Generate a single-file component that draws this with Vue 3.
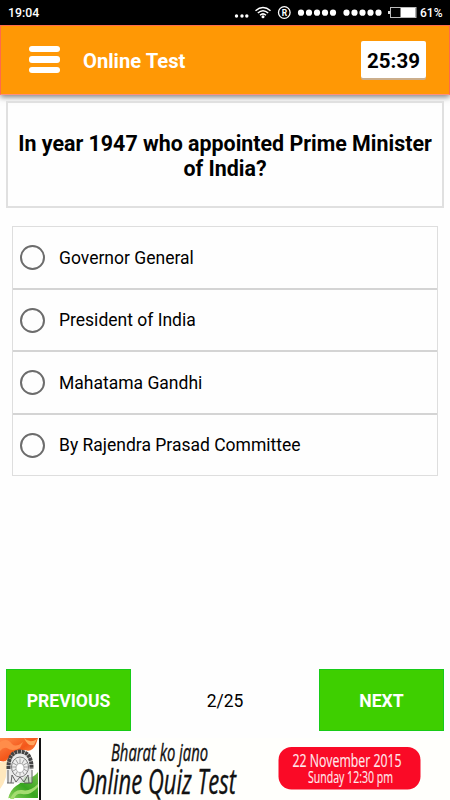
<template>
  <div class="screen">
    <div class="status-bar">
      <span class="clock">19:04</span>
      <svg class="status-icons" width="185" height="25" viewBox="232 0 185 25">
        <g fill="#fff">
          <circle cx="236.5" cy="16" r="1.7" />
          <circle cx="242" cy="16" r="1.7" />
          <circle cx="246.8" cy="16" r="1.7" />
        </g>
        <!-- wifi -->
        <g fill="none" stroke="#fff" stroke-width="1.5">
          <path d="M255.5 10.700 Q263 4.200 270.500 10.700" />
          <path d="M257.800 13 Q263 8.400 268.200 13" />
          <path d="M260 15.300 Q263 12.500 266 15.300" />
        </g>
        <circle cx="263" cy="16.700" r="1.500" fill="#fff" />
        <circle cx="284.300" cy="12.500" r="5.800" fill="none" stroke="#fff" stroke-width="1.300" />
        <text x="284.500" y="15.700" class="reg" text-anchor="middle">R</text>
        <circle v-for="x in signalDots" :key="x" :cx="x" cy="12.700" r="3.100" fill="#fff" />
        <!-- battery -->
        <rect x="390.500" y="7.500" width="25.500" height="10" fill="#000" stroke="#bbb" />
        <rect x="400.500" y="8" width="15" height="9" fill="#fff" />
        <rect x="388" y="11" width="2" height="3" fill="#ddd" />
      </svg>
      <span class="percent">61%</span>
    </div>

    <header class="toolbar">
      <button class="menu" aria-label="Menu">
        <i></i>
        <i></i>
        <i></i>
      </button>
      <h1>Online Test</h1>
      <div class="timer">25:39</div>
    </header>

    <section class="question">
      <p>{{ question }}</p>
    </section>

    <ul class="options">
      <li v-for="(option, index) in options" :key="option" @click="selected = index">
        <span class="radio" :class="{ checked: selected === index }"></span>
        <span>{{ option }}</span>
      </li>
    </ul>

    <footer class="pager">
      <button class="prev">PREVIOUS</button>
      <span class="count">{{ current }}/{{ total }}</span>
      <button class="next">NEXT</button>
    </footer>

    <div class="banner">
      <svg width="450" height="62" viewBox="0 738 450 62">
        <defs>
          <linearGradient id="saffron" x1="0" y1="0" x2="1" y2="1">
            <stop offset="0" stop-color="#ff8a4a" />
            <stop offset="0.5" stop-color="#f4571a" />
            <stop offset="1" stop-color="#ffa557" />
          </linearGradient>
          <linearGradient id="leaf" x1="0" y1="1" x2="1" y2="0">
            <stop offset="0" stop-color="#8fd45c" />
            <stop offset="0.5" stop-color="#36a51e" />
            <stop offset="1" stop-color="#76bf4c" />
          </linearGradient>
        </defs>
        <rect x="0" y="738" width="450" height="62" fill="#fffffc" />
        <path d="M0 738H38L36 744Q32 753 25 750Q16 751 14 755Q9 763 0 761Z" fill="url(#saffron)" />
        <path d="M0 742Q7 737 12 744Q16 748 23 742L20 748Q12 752 7 748Q3 747 0 751Z" fill="#ff8d4a" />
        <path d="M24 738Q30 744 37 739L34 745Q28 747 24 738Z" fill="#ffa45e" />
        <path d="M0 762Q6 763 8 758L6 777Q4 784 0 789Z" fill="#ffe8bd" />
        <path d="M8 799Q10 790 16 786Q22 783 25 776Q32 780 38 772V798H8Z" fill="url(#leaf)" />
        <path d="M10 799Q14 789 22 790Q30 792 38 784V787Q30 796 22 794Q16 793 14 799Z" fill="#a4dc70" />
        <!-- emblem -->
        <path d="M7 783Q5 767 10 756Q19 745 28 753Q34 763 32 783Z" fill="#e4e4e4" fill-opacity="0.8" />
        <path d="M8.500 769Q8 752 20 751.500Q32 752 31.500 769" fill="none" stroke="#444" stroke-width="4" stroke-dasharray="3 0.6" />
        <ellipse cx="20" cy="767" rx="8.500" ry="10" fill="#eee" stroke="#666" stroke-width="0.800" />
        <g stroke="#777" stroke-width="0.600">
          <path
            v-for="angle in spokes"
            :key="angle"
            d="M20 770V775.500"
            :transform="`rotate(${angle} 20 767)`"
          />
        </g>
        <ellipse cx="20" cy="768" rx="4" ry="4.500" fill="#fff" stroke="#888" stroke-width="0.600" />
        <path d="M8 783V770M11 783L12 775L16 782L20 777L24 782L28 775L29 783M32 783V770M7 783H14M24 783H32" fill="none" stroke="#555" stroke-width="0.900" />
        <rect x="39" y="738" width="2" height="62" fill="#111" />

        <text class="italic" x="111" y="761" font-size="23" textLength="97" lengthAdjust="spacingAndGlyphs">Bharat ko jano</text>
        <text class="italic" x="79" y="793.700" font-size="34.500" textLength="157" lengthAdjust="spacingAndGlyphs">Online Quiz Test</text>

        <rect x="278.500" y="747" width="142" height="42.500" rx="13" fill="#fa0a26" />
        <text class="date" x="292.500" y="766.700" font-size="17.500" textLength="109" lengthAdjust="spacingAndGlyphs">22 November 2015</text>
        <text class="date" x="308" y="783.200" font-size="17" textLength="85" lengthAdjust="spacingAndGlyphs">Sunday 12:30 pm</text>
      </svg>
    </div>
  </div>
</template>

<script setup>
import { ref } from 'vue';

const question = 'In year 1947 who appointed Prime Minister of India?';
const options = [
  'Governor General',
  'President of India',
  'Mahatama Gandhi',
  'By Rajendra Prasad Committee',
];

const current = ref(2);
const total = 25;
const selected = ref(null);

const signalDots = [301, 309, 317, 325, 333, 346.5, 354.5, 362.5, 370.5, 378.5];
const spokes = [0, 30, 60, 90, 120, 150, 180, 210, 240, 270, 300, 330];
</script>

<style>
body {
  margin: 0;
  background: #fff;
}
</style>

<style scoped>
.screen {
  width: 450px;
  height: 800px;
  display: flex;
  flex-direction: column;
  overflow: hidden;
  background: #fefefe;
  color: #000;
  font-family: Roboto, "Liberation Sans", sans-serif;
}

.status-bar {
  height: 25px;
  flex: none;
  display: flex;
  align-items: center;
  padding: 0 8px;
  background: #000;
  color: #fff;
  font-size: 12.3px;
  font-weight: 500;
}

.status-icons {
  margin-left: auto;
}

.percent {
  width: 22px;
  margin-left: 3px;
  font-size: 12px;
}

.reg {
  fill: #fff;
  font-size: 8.5px;
  font-weight: 700;
}

.toolbar {
  height: 70px;
  flex: none;
  box-sizing: border-box;
  display: flex;
  align-items: center;
  padding: 0 23px 0 28px;
  background: #ff9805;
  border: 1px solid #ff6a4c;
  border-bottom-color: #ff8f7c;
  box-shadow: 0 2px 6px rgba(0, 0, 0, 0.5);
}

.menu {
  width: 31px;
  padding: 0 0 1px;
  border: 0;
  background: none;
  display: flex;
  flex-direction: column;
  gap: 4.5px;
}

.menu i {
  height: 6.2px;
  border-radius: 3px;
  background: #fff;
}

h1 {
  margin: 2px 0 0 23px;
  color: #fff;
  font-size: 20.2px;
  font-weight: 700;
}

.timer {
  width: 65px;
  height: 37px;
  margin: 0 0 2px auto;
  line-height: 41px;
  text-align: center;
  font-size: 20.5px;
  font-weight: 700;
  background: #fff;
  border-radius: 2px;
  box-shadow: 0 2px 0 #cbae8c;
}

.question {
  height: 107px;
  flex: none;
  box-sizing: border-box;
  margin: 6px 6px 0;
  padding: 2px 4px 0;
  display: flex;
  align-items: center;
  border: 2px solid #e0e0e0;
}

.question p {
  margin: 0;
  width: 100%;
  text-align: center;
  font-size: 21.4px;
  line-height: 25px;
  font-weight: 700;
}

.options {
  flex: none;
  height: 250px;
  box-sizing: border-box;
  display: grid;
  grid-template-rows: 63px 62px 63px 1fr;
  margin: 18px 12px 0;
  padding: 0;
  list-style: none;
  border: 1.5px solid #dedede;
}

.options li {
  display: flex;
  align-items: center;
  gap: 14px;
  padding-left: 7px;
  font-size: 17.5px;
  border-bottom: 2px solid #d4d4d4;
}

.options li:last-child {
  border-bottom: 0;
}

.radio {
  width: 25px;
  height: 25px;
  box-sizing: border-box;
  border: 2px solid #6c6c6c;
  border-radius: 50%;
}

.radio.checked {
  background: radial-gradient(#6c6c6c 45%, transparent 50%);
}

.pager {
  flex: none;
  display: flex;
  align-items: center;
  justify-content: space-between;
  height: 62px;
  margin: auto 6px 7px;
}

.pager button {
  width: 125px;
  height: 62px;
  padding: 2px 0 0;
  border: 1px solid #18cb18;
  background: #3ecf00;
  color: #fff;
  font-family: inherit;
  font-size: 17.6px;
  font-weight: 700;
}

.count {
  padding-top: 2px;
  font-size: 17.5px;
}

.banner {
  flex: none;
  height: 62px;
}

.banner svg {
  display: block;
}

.italic {
  font-family: "Open Sans", "Noto Sans", sans-serif;
  font-style: italic;
  fill: #111;
  stroke: #111;
  stroke-width: 0.4px;
}

.date {
  font-family: "Open Sans", "Noto Sans", sans-serif;
  fill: #ffe9ec;
  stroke: #ffe9ec;
  stroke-width: 0.15px;
}
</style>
